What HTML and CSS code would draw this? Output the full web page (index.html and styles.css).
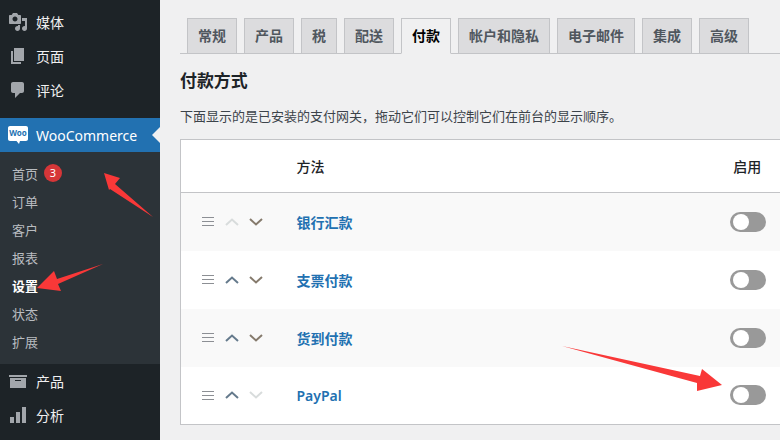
FILE: index.html
```html
<!DOCTYPE html>
<html lang="zh-CN">
<head>
  <meta charset="UTF-8" />
  <title>付款方式</title>
  <link rel="stylesheet" href="styles.css">
</head>
<body>
  <aside class="sidebar">
    <ul class="menu">
      <li class="menu-item">
        <svg class="menu-icon" viewBox="0 0 20 20"><path d="M13 11V4c0-.55-.45-1-1-1h-1.67L9 1H5L3.67 3H2c-.55 0-1 .45-1 1v7c0 .55.45 1 1 1h10c.55 0 1-.45 1-1zM7 4.5c1.38 0 2.5 1.12 2.5 2.5S8.38 9.5 7 9.5 4.5 8.38 4.5 7 5.62 4.5 7 4.5zM14 6h5v10.5c0 1.38-1.12 2.5-2.5 2.5S14 17.88 14 16.5s1.12-2.5 2.5-2.5c.17 0 .34.02.5.05V9h-3V6zm-4 8.05V13h2v3.5c0 1.38-1.12 2.5-2.5 2.5S7 17.88 7 16.5 8.12 14 9.5 14c.17 0 .34.02.5.05z"/></svg>
        <span>媒体</span>
      </li>
      <li class="menu-item">
        <svg class="menu-icon" viewBox="0 0 20 20"><path d="M6 15V2h10v13H6zm-1 1h8v2H3V5h2v11z"/></svg>
        <span>页面</span>
      </li>
      <li class="menu-item">
        <svg class="menu-icon" viewBox="0 0 20 20"><path d="M5 2h9c1.1 0 2 .9 2 2v7c0 1.1-.9 2-2 2h-2l-5 5v-5H5c-1.1 0-2-.9-2-2V4c0-1.1.9-2 2-2z"/></svg>
        <span>评论</span>
      </li>
      <li class="menu-item current">
        <svg class="menu-icon" viewBox="0 0 20 20">
          <path class="woo-bubble" d="M2 1h16c1.1 0 2 .9 2 2v11c0 1.1-.9 2-2 2h-6l-1 3-2.500-3H2c-1.100 0-2-.9-2-2V3c0-1.100.9-2 2-2z"/>
          <text class="woo-text" x="10" y="11" text-anchor="middle">Woo</text>
        </svg>
        <span>WooCommerce</span>
      </li>
    </ul>
    <ul class="submenu">
      <li>首页 <span class="badge">3</span></li>
      <li>订单</li>
      <li>客户</li>
      <li>报表</li>
      <li class="active">设置</li>
      <li>状态</li>
      <li>扩展</li>
    </ul>
    <ul class="menu">
      <li class="menu-item">
        <svg class="menu-icon" viewBox="0 0 20 20"><path d="M19 4v2H1V4h18zM2 7h16v10H2V7zm11 3V9H7v1h6z"/></svg>
        <span>产品</span>
      </li>
      <li class="menu-item">
        <svg class="menu-icon" viewBox="0 0 20 20"><path d="M18 18V2h-4v16h4zm-6 0V7H8v11h4zm-6 0v-6H2v6h4z"/></svg>
        <span>分析</span>
      </li>
    </ul>
  </aside>

  <main class="content">
    <nav class="tabs">
      <a class="tab">常规</a>
      <a class="tab">产品</a>
      <a class="tab">税</a>
      <a class="tab">配送</a>
      <a class="tab tab-active">付款</a>
      <a class="tab">帐户和隐私</a>
      <a class="tab">电子邮件</a>
      <a class="tab">集成</a>
      <a class="tab">高级</a>
    </nav>

    <h2 class="title">付款方式</h2>
    <p class="desc">下面显示的是已安装的支付网关，拖动它们可以控制它们在前台的显示顺序。</p>

    <table class="gateways">
      <thead>
        <tr>
          <th class="col-sort"></th>
          <th class="col-name">方法</th>
          <th class="col-status">启用</th>
        </tr>
      </thead>
      <tbody>
        <tr>
          <td class="col-sort">
            <div class="sort-tools">
              <svg class="drag" viewBox="0 0 12 9"><path d="M0 0h12v1H0zM0 4h12v1H0zM0 8h12v1H0z"/></svg>
              <svg class="move up off" viewBox="0 0 14 8"><path d="M1 7l6-5.500L13 7"/></svg>
              <svg class="move down" viewBox="0 0 14 8"><path d="M1 1l6 5.500L13 1"/></svg>
            </div>
          </td>
          <td class="col-name"><a>银行汇款</a></td>
          <td class="col-status"><span class="toggle"></span></td>
        </tr>
        <tr>
          <td class="col-sort">
            <div class="sort-tools">
              <svg class="drag" viewBox="0 0 12 9"><path d="M0 0h12v1H0zM0 4h12v1H0zM0 8h12v1H0z"/></svg>
              <svg class="move up" viewBox="0 0 14 8"><path d="M1 7l6-5.500L13 7"/></svg>
              <svg class="move down" viewBox="0 0 14 8"><path d="M1 1l6 5.500L13 1"/></svg>
            </div>
          </td>
          <td class="col-name"><a>支票付款</a></td>
          <td class="col-status"><span class="toggle"></span></td>
        </tr>
        <tr>
          <td class="col-sort">
            <div class="sort-tools">
              <svg class="drag" viewBox="0 0 12 9"><path d="M0 0h12v1H0zM0 4h12v1H0zM0 8h12v1H0z"/></svg>
              <svg class="move up" viewBox="0 0 14 8"><path d="M1 7l6-5.500L13 7"/></svg>
              <svg class="move down" viewBox="0 0 14 8"><path d="M1 1l6 5.500L13 1"/></svg>
            </div>
          </td>
          <td class="col-name"><a>货到付款</a></td>
          <td class="col-status"><span class="toggle"></span></td>
        </tr>
        <tr>
          <td class="col-sort">
            <div class="sort-tools">
              <svg class="drag" viewBox="0 0 12 9"><path d="M0 0h12v1H0zM0 4h12v1H0zM0 8h12v1H0z"/></svg>
              <svg class="move up" viewBox="0 0 14 8"><path d="M1 7l6-5.500L13 7"/></svg>
              <svg class="move down off" viewBox="0 0 14 8"><path d="M1 1l6 5.500L13 1"/></svg>
            </div>
          </td>
          <td class="col-name"><a>PayPal</a></td>
          <td class="col-status"><span class="toggle"></span></td>
        </tr>
      </tbody>
    </table>
  </main>

  <!-- red arrows drawn on top of the screenshot -->
  <svg class="arrows" viewBox="0 0 780 440">
    <path d="M104 173L120 178 115 184 153 217 110 189 109 190z"/>
    <path d="M37 288L54 271 57 279 103 264 58 284 61 291z"/>
    <path d="M562 346L700 376 702 369 722 385 697 391 697 383z"/>
  </svg>
</body>
</html>
```

FILE: styles.css
```css
* {
  box-sizing: border-box;
  margin: 0;
  padding: 0;
}

html, body {
  height: 440px;
  overflow: hidden;
}

body {
  display: flex;
  background: #f0f0f1;
  color: #3c434a;
  font-family: 'Noto Sans', 'Noto Sans CJK SC', sans-serif;
  font-size: 13px;
}

ul {
  list-style: none;
}

.sidebar {
  width: 160px;
  flex-shrink: 0;
  padding-top: 5px;
  background: #1d2327;
}

.menu-item {
  display: flex;
  align-items: center;
  gap: 8px;
  height: 34px;
  padding-left: 8px;
  color: #f0f0f1;
  font-size: 14px;
  position: relative;
}

.menu-icon {
  width: 20px;
  height: 20px;
  fill: #a2a6ab;
}

.menu-item.current {
  margin-top: 11px;
  background: #2271b1;
  color: #fff;
}

.menu-item.current::after {
  content: "";
  position: absolute;
  right: 0;
  top: 9px;
  border: 8px solid transparent;
  border-right-color: #f0f0f1;
}

.woo-bubble {
  fill: #fff;
}

.woo-text {
  fill: #2271b1;
  font-size: 8px;
  font-weight: 700;
}

.submenu {
  padding: 7px 0 9px;
  background: #2c3338;
}

.submenu li {
  display: flex;
  align-items: center;
  gap: 6px;
  height: 28px;
  padding-left: 12px;
  color: #b9bcc0;
}

.submenu li.active {
  color: #fff;
  font-weight: 700;
}

.badge {
  width: 18px;
  height: 18px;
  border-radius: 50%;
  background: #d63638;
  color: #fff;
  font-size: 11px;
  line-height: 18px;
  text-align: center;
}

.content {
  flex: 1;
  min-width: 0;
  padding: 18px 0 0 20px;
}

.tabs {
  display: flex;
  gap: 7px;
  width: 600px;
  padding-left: 7px;
  border-bottom: 1px solid #c3c4c7;
}

.tab {
  height: 36px;
  margin-bottom: -1px;
  padding: 0 10px;
  border: 1px solid #c3c4c7;
  background: #dcdcde;
  color: #50575e;
  font-size: 14px;
  font-weight: 600;
  line-height: 33px;
}

.tab-active {
  background: #f0f0f1;
  border-bottom-color: #f0f0f1;
  color: #000;
}

.title {
  margin-top: 15px;
  color: #1d2327;
  font-size: 16.9px;
  font-weight: 700;
  line-height: 24px;
}

.desc {
  margin-top: 13px;
  line-height: 20px;
}

.gateways {
  width: 620px;
  margin-top: 13px;
  border: 1px solid #c3c4c7;
  border-collapse: collapse;
  table-layout: fixed;
  background: #fff;
  font-size: 14px;
}

.gateways th {
  height: 53px;
  border-bottom: 1px solid #c3c4c7;
  color: #1d2327;
  font-weight: 500;
  text-align: left;
}

.gateways td {
  height: 58px;
}

.gateways tbody tr:nth-child(odd) {
  background: #f9f9f9;
}

.col-sort {
  width: 116px;
  padding-left: 21px;
}

.gateways .col-status {
  width: 70px;
  padding-right: 34px;
  text-align: center;
}

.sort-tools {
  display: flex;
  align-items: center;
}

.drag {
  width: 12px;
  height: 9px;
  fill: #8c8f94;
}

.move {
  width: 14px;
  height: 8px;
  fill: none;
  stroke-width: 2;
}

.up {
  margin-left: 11px;
  stroke: #657a8c;
}

.down {
  margin-left: 10px;
  stroke: #857a6c;
}

.move.off {
  stroke: #d8dcdc;
}

.col-name a {
  color: #2271b1;
  font-weight: 600;
}

.toggle {
  display: block;
  width: 36px;
  height: 20px;
  border-radius: 10px;
  background: #999;
  position: relative;
}

.toggle::after {
  content: "";
  position: absolute;
  left: 3px;
  top: 2px;
  width: 16px;
  height: 16px;
  border-radius: 50%;
  background: #fff;
}

.arrows {
  position: absolute;
  left: 0;
  top: 0;
  width: 780px;
  height: 440px;
  fill: #f93838;
  pointer-events: none;
}
```
